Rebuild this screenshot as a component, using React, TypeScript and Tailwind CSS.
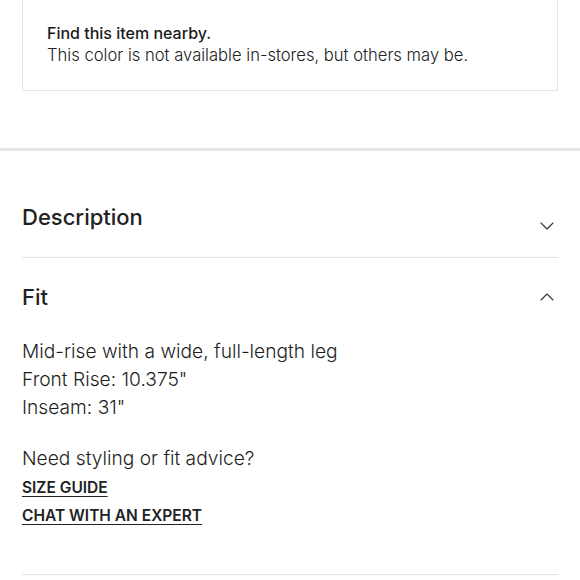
import { ChevronDown, ChevronUp } from 'lucide-react';

export default function App() {
  return (
    <div className="w-[580px] h-[580px] overflow-hidden bg-white text-[#222]" style={{ fontFamily: 'Inter, "Noto Sans", sans-serif' }}>
      <div className="mx-[22px] border-x border-b border-[#e3e3e3] pt-[22px] pb-[23px] px-[24px]">
        <p className="text-[16px] leading-[22px] font-medium text-[#1a1a1a]">Find this item nearby.</p>
        <p className="text-[16.6px] leading-[23px] font-light text-[#222]">This color is not available in-stores, but others may be.</p>
      </div>

      <div className="mt-[57px] h-[3px] bg-[#e6e6e6]" />

      <div className="mx-[22px]">
        <div className="flex items-start justify-between h-[107px] pt-[51px] border-b border-[#e3e3e3]">
          <h2 className="text-[22px] leading-[30px] font-medium text-[#222]">Description</h2>
          <ChevronDown size={24} strokeWidth={1.1} className="mt-[12px] -mr-[1px] text-[#333]" />
        </div>

        <div className="flex items-center justify-between h-[78px]">
          <h2 className="text-[22px] leading-[30px] font-medium text-[#222]">Fit</h2>
          <ChevronUp size={24} strokeWidth={1.1} className="-mr-[1px] text-[#333]" />
        </div>

        <div className="pt-[1px] text-[19.2px] leading-[28px] font-light text-[#1e1e1e]">
          <p>Mid-rise with a wide, full-length leg</p>
          <p>Front Rise: 10.375"</p>
          <p>Inseam: 31"</p>
          <p className="mt-[23px]">Need styling or fit advice?</p>
          <div className="mt-[2px] text-[15.5px] leading-[28px] font-semibold uppercase text-[#222]">
            <a className="block underline underline-offset-[3px]">Size Guide</a>
            <a className="block underline underline-offset-[3px]">Chat With An Expert</a>
          </div>
        </div>

        <div className="mt-[44px] border-b border-[#e3e3e3]" />
      </div>
    </div>
  );
}
